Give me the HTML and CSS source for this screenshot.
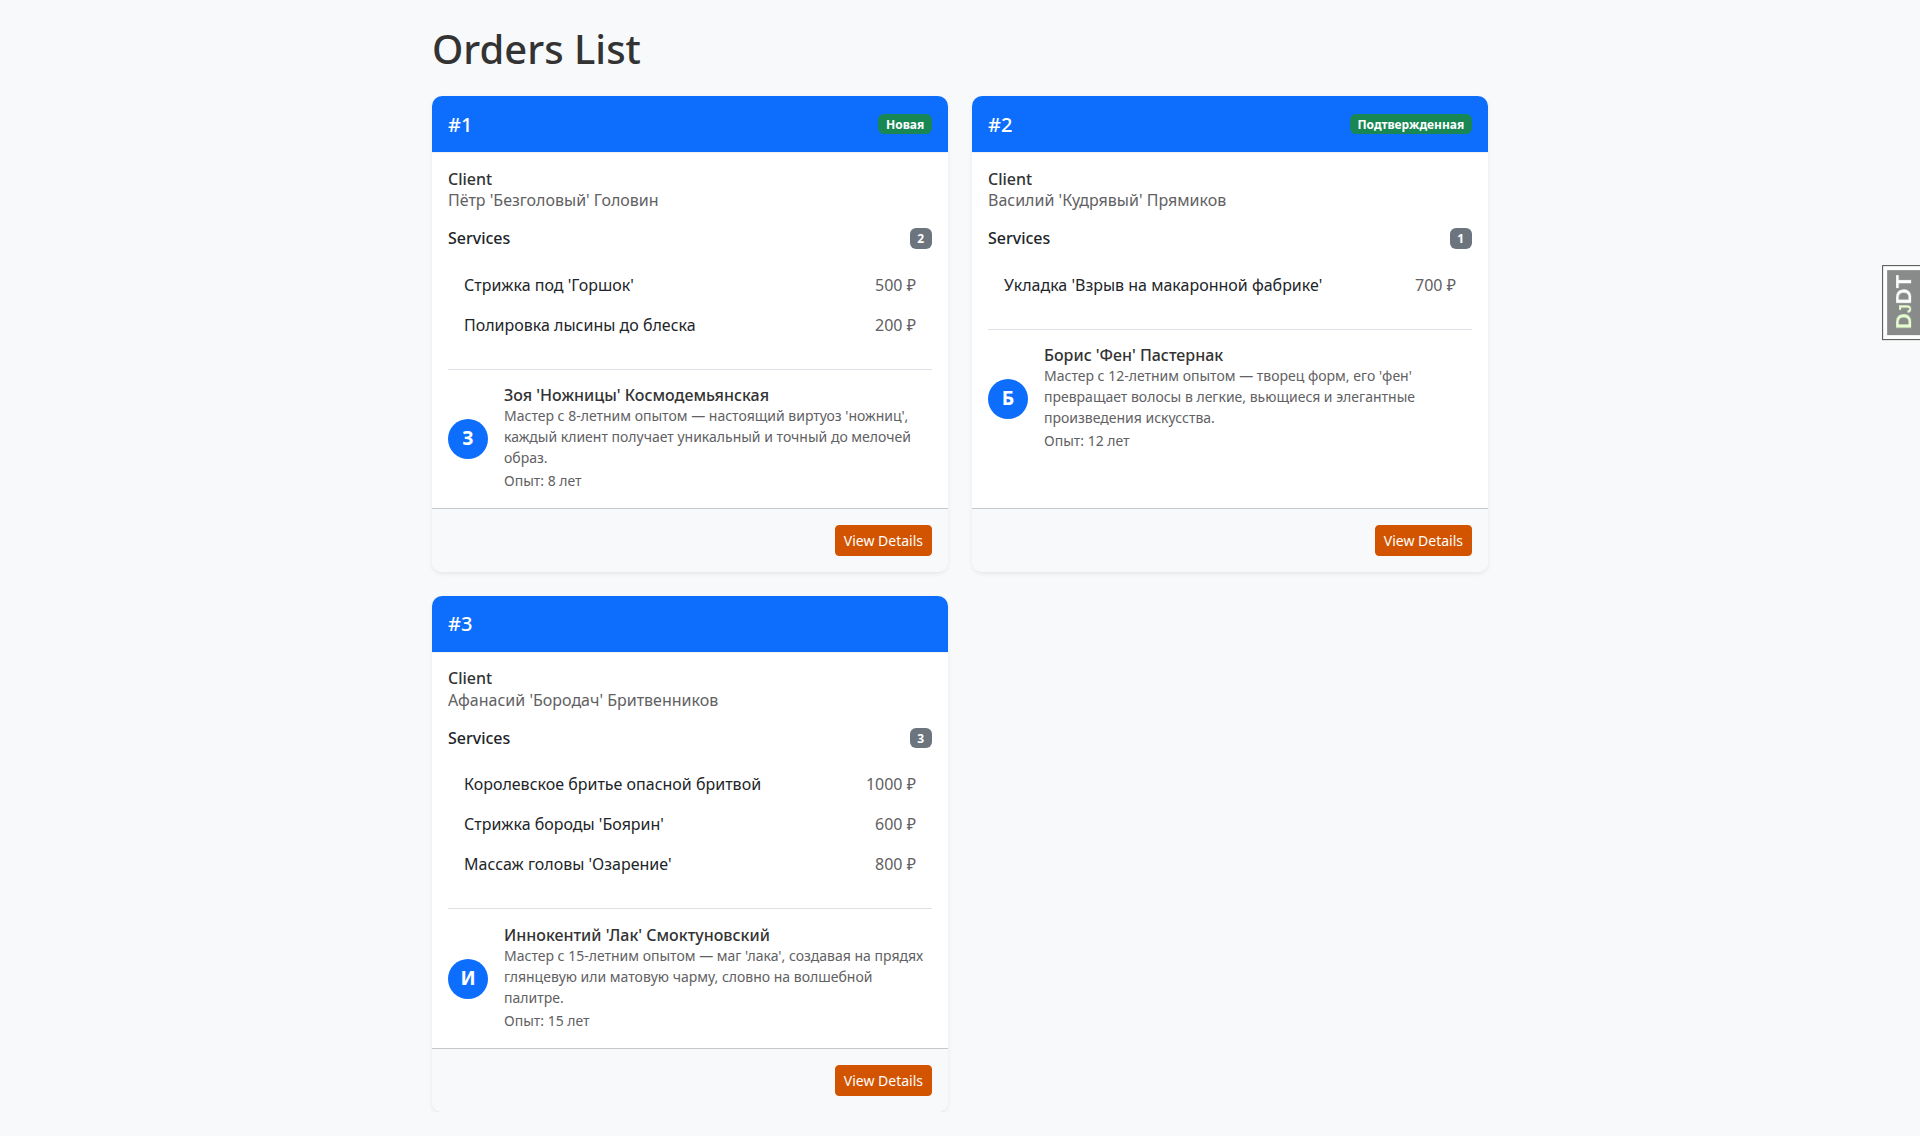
FILE: index.html
```html
<!DOCTYPE html>
<html lang="ru">
<head>
<meta charset="utf-8">
<title>Orders List</title>
<link rel="stylesheet" href="styles.css">
</head>
<body>
<main class="container">
  <h1>Orders List</h1>
  <div class="orders">
    <article class="card">
      <header class="card-header"><h2>#1</h2><span class="badge badge-success">Новая</span></header>
      <div class="card-body">
        <h3>Client</h3>
        <p class="client">Пётр 'Безголовый' Головин</p>
        <div class="services-head"><h3 class="services-title">Services</h3><span class="badge">2</span></div>
        <ul class="services">
          <li><span>Стрижка под 'Горшок'</span><span class="price">500 ₽</span></li>
          <li><span>Полировка лысины до блеска</span><span class="price">200 ₽</span></li>
        </ul>
        <div class="master">
          <div class="avatar">З</div>
          <div>
            <h3>Зоя 'Ножницы' Космодемьянская</h3>
            <p class="bio">Мастер с 8-летним опытом — настоящий виртуоз 'ножниц', каждый клиент получает уникальный и точный до мелочей образ.</p>
            <div class="experience"><small>Опыт: 8 лет</small></div>
          </div>
        </div>
      </div>
      <footer class="card-footer"><a class="btn">View Details</a></footer>
    </article>
    <article class="card">
      <header class="card-header"><h2>#2</h2><span class="badge badge-success">Подтвержденная</span></header>
      <div class="card-body">
        <h3>Client</h3>
        <p class="client">Василий 'Кудрявый' Прямиков</p>
        <div class="services-head"><h3 class="services-title">Services</h3><span class="badge">1</span></div>
        <ul class="services">
          <li><span>Укладка 'Взрыв на макаронной фабрике'</span><span class="price">700 ₽</span></li>
        </ul>
        <div class="master">
          <div class="avatar">Б</div>
          <div>
            <h3>Борис 'Фен' Пастернак</h3>
            <p class="bio">Мастер с 12-летним опытом — творец форм, его 'фен' превращает волосы в легкие, вьющиеся и элегантные произведения искусства.</p>
            <div class="experience"><small>Опыт: 12 лет</small></div>
          </div>
        </div>
      </div>
      <footer class="card-footer"><a class="btn">View Details</a></footer>
    </article>
    <article class="card">
      <header class="card-header"><h2>#3</h2></header>
      <div class="card-body">
        <h3>Client</h3>
        <p class="client">Афанасий 'Бородач' Бритвенников</p>
        <div class="services-head"><h3 class="services-title">Services</h3><span class="badge">3</span></div>
        <ul class="services">
          <li><span>Королевское бритье опасной бритвой</span><span class="price">1000 ₽</span></li>
          <li><span>Стрижка бороды 'Боярин'</span><span class="price">600 ₽</span></li>
          <li><span>Массаж головы 'Озарение'</span><span class="price">800 ₽</span></li>
        </ul>
        <div class="master">
          <div class="avatar">И</div>
          <div>
            <h3>Иннокентий 'Лак' Смоктуновский</h3>
            <p class="bio">Мастер с 15-летним опытом — маг 'лака', создавая на прядях глянцевую или матовую чарму, словно на волшебной палитре.</p>
            <div class="experience"><small>Опыт: 15 лет</small></div>
          </div>
        </div>
      </div>
      <footer class="card-footer"><a class="btn">View Details</a></footer>
    </article>
  </div>
</main>
<div class="debug-handle"><div class="debug-button"><span class="debug-d">D</span><span class="debug-j">J</span>DT</div></div>
</body>
</html>
```
FILE: styles.css
```css
*, *::before, *::after { box-sizing: border-box; }
body {
  margin: 0;
  background: #f8f9fa;
  color: #212529;
  font: 400 16px/1.5 "Noto Sans", "Liberation Sans", sans-serif;
}
h1, h2, h3, p, ul { margin: 0; padding: 0; }
h1, h2, h3 {
  padding-top: .6px;
  margin-bottom: -.6px;
  font-weight: 500;
  line-height: 1.2;
}
.container { width: 1056px; margin: 0 auto; padding-top: 24px; }
h1 { font-size: 40px; color: #333; margin-bottom: 23.4px; }
.orders { display: grid; grid-template-columns: 1fr 1fr; gap: 24px; }
.card {
  display: flex;
  flex-direction: column;
  background: #fff;
  border-radius: 10px;
  box-shadow: 0 2px 4px rgba(0, 0, 0, .075);
}
.card-header {
  display: flex;
  justify-content: space-between;
  align-items: center;
  padding: 16px;
  background: #0d6efd;
  background-clip: padding-box;
  border-bottom: 1px solid #eef0f2;
  border-radius: 10px 10px 0 0;
  color: #fff;
}
h2 { font-size: 20px; }
h3 { font-size: 16px; color: #333; }
.badge {
  padding: 4.8px 7.8px 3.6px;
  border-radius: 6px;
  background: #6c757d;
  color: #fff;
  font-size: 12px;
  font-weight: 700;
  line-height: 1;
}
.badge-success { background: #198754; }
.card-body { flex: 1 1 auto; padding: 16px; }
.client { color: #5f6163; margin-bottom: 16px; }
.services-head {
  display: flex;
  justify-content: space-between;
  align-items: center;
  margin-bottom: 16px;
}
.services-title { color: #212529; }
.services { list-style: none; margin-bottom: 24px; }
.services li { display: flex; justify-content: space-between; padding: 8px 16px; }
.price { color: #5f6163; }
.master {
  display: flex;
  align-items: center;
  gap: 16px;
  padding-top: 16px;
  border-top: 1px solid #dee2e6;
}
.avatar {
  flex: none;
  display: flex;
  align-items: center;
  justify-content: center;
  width: 40px;
  height: 40px;
  margin-top: .4px;
  border-radius: 50%;
  background: #0d6efd;
  color: #fff;
  font-size: 19.2px;
  font-weight: 700;
}
.bio { font-size: 14px; color: #5f6163; }
.experience { color: #5f6163; }
.experience small { font-size: 14px; }
.card-footer {
  display: flex;
  justify-content: flex-end;
  padding: 16px;
  background: #f8f9fa;
  border-top: 1px solid #c6c7c8;
  border-radius: 0 0 10px 10px;
}
.btn {
  padding: 4px 8px;
  border: 1px solid #d35400;
  border-radius: 4px;
  background: #d35400;
  color: #fff;
  font-size: 14px;
  line-height: 21px;
}
.debug-handle {
  position: fixed;
  top: 265px;
  right: 0;
  transform: translateY(-100%) rotate(-90deg);
  transform-origin: right bottom;
  background: #fff;
  border: 1px solid #111;
  border-bottom: 0;
  opacity: .75;
}
.debug-button {
  padding: 0 5px 0 6px;
  border: 4px solid #fff;
  border-bottom: 0;
  background: #000;
  color: #fff;
  font: 700 22px/1.5 "Liberation Sans", sans-serif;
  opacity: .6;
}
.debug-d { color: #cf9; }
.debug-j { color: #cf9; font-size: 16px; }
```
